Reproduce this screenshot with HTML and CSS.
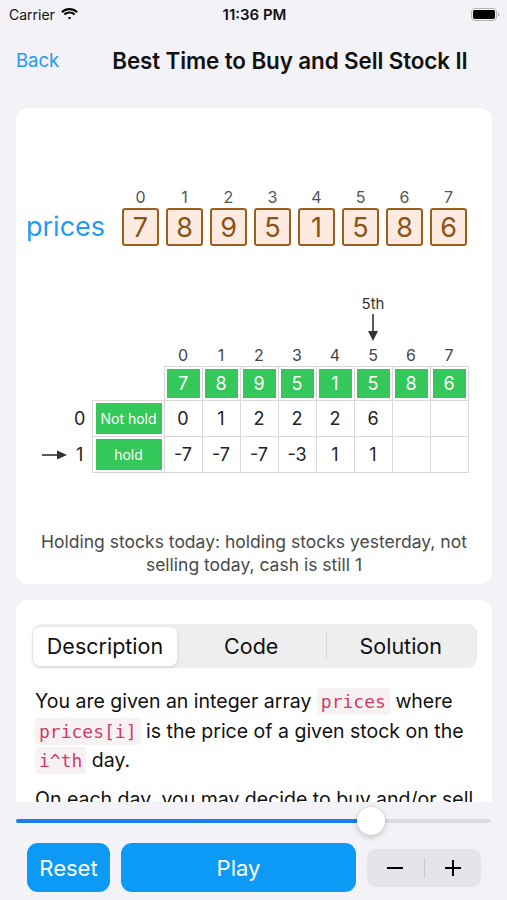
FILE: index.html
```html
<!DOCTYPE html>
<html lang="en">
  <head>
    <meta charset="utf-8" />
    <meta name="viewport" content="width=device-width, initial-scale=1.0" />
    <title>Best Time to Buy and Sell Stock II</title>
    <link rel="stylesheet" href="styles.css">
  </head>
  <body>
    <div id="status-bar">
      <div class="carrier">
        Carrier
        <svg width="19" height="14" viewBox="0 0 19 14">
          <path d="M9.5 3.2c2.6 0 5 1 6.8 2.7l1.5-1.6C15.6 2.2 12.7 1 9.5 1S3.4 2.2 1.2 4.3l1.5 1.6C4.5 4.2 6.9 3.2 9.5 3.2z" fill="#000"/>
          <path d="M9.5 6.6c1.6 0 3.1.6 4.3 1.7l1.5-1.6C13.7 5.2 11.7 4.4 9.5 4.4S5.3 5.2 3.7 6.7l1.5 1.6c1.2-1.1 2.7-1.7 4.3-1.7z" fill="#000"/>
          <path d="M9.5 9.9c.7 0 1.3.3 1.8.7L9.5 12.6 7.7 10.6c.5-.4 1.1-.7 1.8-.7z" fill="#000"/>
        </svg>
      </div>
      <div class="time">11:36 PM</div>
      <div class="battery">
        <svg width="29" height="13" viewBox="0 0 29 13">
          <rect x="0.5" y="0.5" width="25" height="12" rx="3.5" fill="none" stroke="#b5b5b5"/>
          <rect x="2" y="2" width="22" height="9" rx="2" fill="#000"/>
          <path d="M27 4.5v4c.9-.3 1.5-1.1 1.5-2s-.6-1.7-1.5-2z" fill="#b5b5b5"/>
        </svg>
      </div>
    </div>

    <nav id="nav-bar">
      <span class="back">Back</span>
      <span class="title">Best Time to Buy and Sell Stock II</span>
    </nav>

    <section class="card" id="visual-card">
      <div class="array-grid">
        <span></span>
        <span class="idx">0</span><span class="idx">1</span><span class="idx">2</span><span class="idx">3</span>
        <span class="idx">4</span><span class="idx">5</span><span class="idx">6</span><span class="idx">7</span>
        <span class="array-name">prices</span>
        <span class="box">7</span><span class="box">8</span><span class="box">9</span><span class="box">5</span>
        <span class="box">1</span><span class="box">5</span><span class="box">8</span><span class="box">6</span>
      </div>

      <table class="dp-table">
        <colgroup>
          <col class="col-arrow" /><col class="col-index" /><col class="col-label" />
          <col class="col-data" /><col class="col-data" /><col class="col-data" /><col class="col-data" />
          <col class="col-data" /><col class="col-data" /><col class="col-data" /><col class="col-data" />
        </colgroup>
        <tr class="row-marker">
          <td></td><td></td><td></td>
          <td></td><td></td><td></td><td></td><td></td>
          <td class="marker">5th</td><td></td><td></td>
        </tr>
        <tr class="row-pointer">
          <td></td><td></td><td></td>
          <td></td><td></td><td></td><td></td><td></td>
          <td>
            <svg width="12" height="28" viewBox="0 0 12 28">
              <line x1="6" y1="0" x2="6" y2="20" stroke="#333" stroke-width="1.6"/>
              <polygon points="1,17 11,17 6,27" fill="#333"/>
            </svg>
          </td>
          <td></td><td></td>
        </tr>
        <tr class="row-index">
          <td></td><td></td><td></td>
          <td>0</td><td>1</td><td>2</td><td>3</td><td>4</td><td>5</td><td>6</td><td>7</td>
        </tr>
        <tr class="row-head">
          <td></td><td></td><td></td>
          <td class="cell"><span class="green">7</span></td>
          <td class="cell"><span class="green">8</span></td>
          <td class="cell"><span class="green">9</span></td>
          <td class="cell"><span class="green">5</span></td>
          <td class="cell"><span class="green">1</span></td>
          <td class="cell"><span class="green">5</span></td>
          <td class="cell"><span class="green">8</span></td>
          <td class="cell"><span class="green">6</span></td>
        </tr>
        <tr class="row-data">
          <td></td>
          <td class="row-num">0</td>
          <td class="cell"><span class="green label">Not hold</span></td>
          <td class="cell">0</td><td class="cell">1</td><td class="cell">2</td><td class="cell">2</td>
          <td class="cell">2</td><td class="cell">6</td><td class="cell"></td><td class="cell"></td>
        </tr>
        <tr class="row-data">
          <td class="arrow-cell">
            <svg width="26" height="10" viewBox="0 0 26 10">
              <line x1="0" y1="5" x2="18" y2="5" stroke="#333" stroke-width="1.6"/>
              <polygon points="15,0.5 25,5 15,9.5" fill="#333"/>
            </svg>
          </td>
          <td class="row-num">1</td>
          <td class="cell"><span class="green label">hold</span></td>
          <td class="cell">-7</td><td class="cell">-7</td><td class="cell">-7</td><td class="cell">-3</td>
          <td class="cell">1</td><td class="cell">1</td><td class="cell"></td><td class="cell"></td>
        </tr>
      </table>

      <p class="caption">Holding stocks today: holding stocks yesterday, not selling today, cash is still 1</p>
    </section>

    <section class="card" id="info-card">
      <div class="segmented">
        <span class="segment selected">Description</span>
        <span class="segment">Code</span>
        <span class="divider"></span>
        <span class="segment">Solution</span>
      </div>
      <div class="description">
        <p>You are given an integer array <code>prices</code> where <code>prices[i]</code> is the price of a given stock on the <code>i^th</code> day.</p>
        <p>On each day, you may decide to buy and/or sell</p>
      </div>
    </section>

    <div id="controls">
      <div class="slider">
        <div class="track"><div class="fill" style="width: 355px"></div></div>
        <div class="thumb" style="left: 341px"></div>
      </div>
      <div class="buttons">
        <button class="btn reset">Reset</button>
        <button class="btn play">Play</button>
        <div class="stepper">
          <span class="step">
            <svg width="18" height="18" viewBox="0 0 18 18"><line x1="1" y1="9" x2="17" y2="9" stroke="#000" stroke-width="2"/></svg>
          </span>
          <span class="step-divider"></span>
          <span class="step">
            <svg width="18" height="18" viewBox="0 0 18 18"><line x1="1" y1="9" x2="17" y2="9" stroke="#000" stroke-width="2"/><line x1="9" y1="1" x2="9" y2="17" stroke="#000" stroke-width="2"/></svg>
          </span>
        </div>
      </div>
    </div>
  </body>
</html>
```

FILE: styles.css
```css
body {
  margin: 0;
  width: 507px;
  height: 900px;
  overflow: hidden;
  background: #f2f2f7;
  font-family: "Inter", "Noto Sans", sans-serif;
  color: #111;
}

#status-bar {
  height: 28px;
  display: flex;
  align-items: center;
  justify-content: space-between;
  padding: 0 7px 0 9px;
  font-size: 14px;
}

.carrier {
  display: flex;
  align-items: center;
  gap: 5px;
  width: 90px;
}

.time {
  font-weight: 600;
  font-size: 15px;
}

.battery {
  width: 90px;
  display: flex;
  justify-content: flex-end;
}

#nav-bar {
  height: 64px;
  display: flex;
  align-items: center;
  padding: 0 16px;
  gap: 53px;
}

.back {
  color: #1e9bf5;
  font-size: 18.5px;
}

.title {
  font-size: 22.4px;
  font-weight: 600;
  letter-spacing: -0.1px;
  white-space: nowrap;
}

.card {
  background: #fff;
  margin: 16px 15px 0 16px;
  border-radius: 12px;
}

#visual-card {
  height: 476px;
  padding-top: 80px;
  box-sizing: border-box;
}

.array-grid {
  display: grid;
  grid-template-columns: 89px repeat(8, 37px);
  grid-template-rows: 20px 38px;
  column-gap: 7px;
  margin-left: 10px;
}

.idx {
  text-align: center;
  font-size: 16px;
  color: #555;
  line-height: 18px;
}

.array-name {
  align-self: center;
  color: #1e9bf5;
  font-size: 27px;
  line-height: 30px;
  white-space: nowrap;
}

.box {
  box-sizing: border-box;
  border: 2px solid #9c5e1a;
  border-radius: 3px;
  background: #fdebe2;
  color: #8a5416;
  font-size: 27px;
  display: flex;
  align-items: center;
  justify-content: center;
}

.dp-table {
  margin: 48px 0 0 20px;
  border-collapse: collapse;
  table-layout: fixed;
  width: 432px;
}

.col-arrow { width: 32px; }
.col-index { width: 24px; }
.col-label { width: 72px; }
.col-data { width: 38px; }

.dp-table td {
  padding: 0;
  text-align: center;
  vertical-align: middle;
}

.row-marker td {
  height: 18px;
  font-size: 15px;
  color: #333;
}

.marker {
  white-space: nowrap;
}

.row-pointer td {
  height: 30px;
  line-height: 0;
}

.row-index td {
  height: 23px;
  font-size: 16px;
  color: #444;
}

.row-head td {
  height: 33px;
}

.row-data td {
  height: 35px;
  font-size: 18px;
  color: #222;
}

.dp-table .cell {
  border: 1px solid #d8d8d8;
}

.green {
  display: flex;
  align-items: center;
  justify-content: center;
  margin: 0 2px;
  height: 29px;
  background: #34c759;
  color: #fff;
  font-size: 18px;
}

.green.label {
  height: 31px;
  margin: 0 2px 0 3px;
  font-size: 14px;
}

.row-num {
  font-size: 18px;
}

.arrow-cell {
  line-height: 0;
  text-align: right !important;
}

.caption {
  margin: 57px 16px 0;
  text-align: center;
  font-size: 17.5px;
  line-height: 23px;
  color: #4a4a4a;
}

#info-card {
  height: 202px;
  overflow: hidden;
  border-radius: 12px 12px 0 0;
  padding: 24px 15px 0 16px;
  box-sizing: border-box;
}

.segmented {
  display: flex;
  align-items: center;
  height: 44px;
  background: #eeeeef;
  border-radius: 9px;
  padding: 0 2px 0 1px;
  box-sizing: border-box;
}

.segment {
  flex: 1;
  text-align: center;
  font-size: 21.5px;
  line-height: 39px;
  border-radius: 7px;
}

.segment.selected {
  flex: 0 0 144px;
  background: #fff;
  box-shadow: 0 2px 4px rgba(0, 0, 0, 0.1);
}

.divider {
  width: 1px;
  height: 26px;
  background: #d6d6d8;
}

.description {
  padding: 0 3px;
  font-size: 19.5px;
  line-height: 29.5px;
}

.description p {
  margin: 19px 0 0;
}

.description p + p {
  margin-top: 9px;
}

code {
  font-family: "DejaVu Sans Mono", "Liberation Mono", monospace;
  font-size: 18px;
  color: #d23a6a;
  background: #f7f2f2;
  border-radius: 4px;
  padding: 3px 4px;
}

#controls {
  padding: 0 16px;
}

.slider {
  position: relative;
  height: 38px;
}

.track {
  position: absolute;
  left: 0;
  right: 0;
  top: 17px;
  height: 4px;
  border-radius: 2px;
  background: #dcdce0;
}

.fill {
  height: 4px;
  border-radius: 2px;
  background: #1a7ff0;
}

.thumb {
  position: absolute;
  top: 5px;
  width: 28px;
  height: 28px;
  border-radius: 50%;
  background: #fff;
  box-shadow: 0 2px 6px rgba(0, 0, 0, 0.2), 0 0 1px rgba(0, 0, 0, 0.15);
}

.buttons {
  display: flex;
  align-items: center;
  gap: 11px;
  margin: 3px 10px 0 11px;
}

.btn {
  border: none;
  background: #0d9af6;
  color: #fff;
  font-family: "Inter", "Noto Sans", sans-serif;
  font-size: 22px;
  height: 49px;
  border-radius: 11px;
  padding: 0;
}

.reset {
  width: 83px;
}

.play {
  width: 235px;
}

.stepper {
  width: 114px;
  height: 38px;
  display: flex;
  align-items: center;
  background: #e4e4e9;
  border-radius: 9px;
}

.step {
  flex: 1;
  display: flex;
  justify-content: center;
  line-height: 0;
}

.step-divider {
  width: 1px;
  height: 20px;
  background: #c8c8cc;
}
```
